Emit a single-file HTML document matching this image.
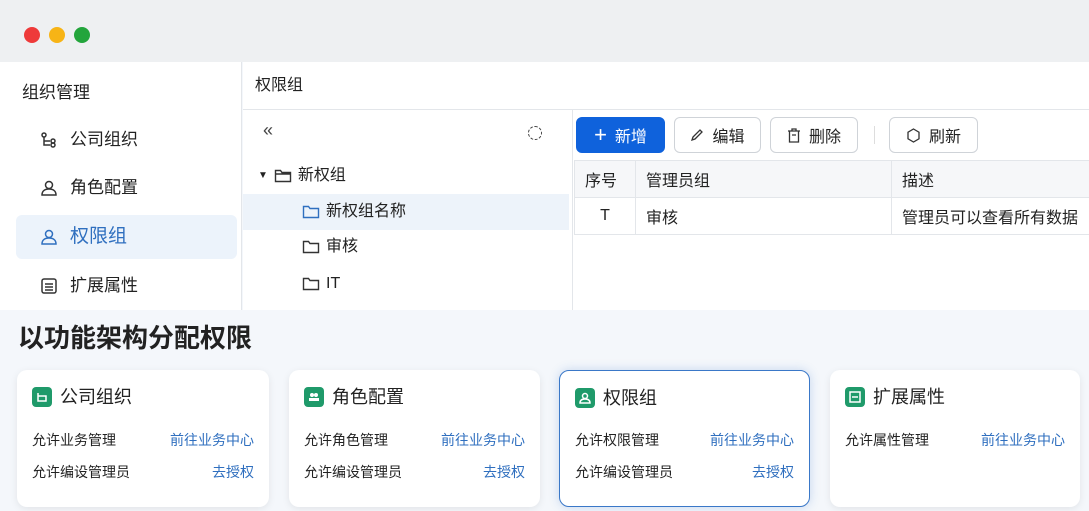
<!DOCTYPE html>
<html><head><meta charset="utf-8"><style>
*{margin:0;padding:0;box-sizing:border-box}
body{width:1089px;height:511px;overflow:hidden;background:#f4f7fb;font-family:"Liberation Sans","Noto Sans CJK SC",sans-serif;color:#222;position:relative}
.abs{position:absolute}
.title{left:0;top:0;width:1089px;height:62px;background:#eef0f2}
.dot{width:16px;height:16px;border-radius:50%;top:27px}
.side{left:0;top:62px;width:242px;height:248px;background:#fff;border-right:1px solid #e3e6ea}
.main{left:243px;top:62px;width:846px;height:248px;background:#fff}
.nav{font-size:17px;display:flex;align-items:center;gap:12px;color:#222;line-height:24px}
.tree{font-size:16px;display:flex;align-items:center;gap:6px;line-height:22px}
.btn{top:117px;height:36px;border:1px solid #cfd3d8;border-radius:6px;background:#fff;font-size:16px;display:flex;align-items:center;justify-content:center;gap:8px}
.card{top:370px;height:137px;background:#fff;border-radius:10px;box-shadow:0 2px 8px rgba(0,0,0,.08)}
.card h3{position:absolute;left:15px;top:15px;font-size:18px;font-weight:normal;display:flex;align-items:center;gap:8px;line-height:24px}
.ic{width:20px;height:20px;background:#1f9a6a;border-radius:4px;display:inline-block}
.row{position:absolute;left:15px;right:15px;font-size:14px;display:flex;justify-content:space-between;line-height:20px}
.row b{font-weight:normal;color:#2f6fbf}
td,th{border:1px solid #e3e6ea;font-weight:normal;font-size:16px;text-align:left;padding:0 10px;height:37px}
</style></head><body>
<div class="abs title"></div>
<div class="abs dot" style="left:24px;background:#ee3a3a"></div>
<div class="abs dot" style="left:49px;background:#f7b416"></div>
<div class="abs dot" style="left:74px;background:#23a53c"></div>
<div class="abs side"></div>
<div class="abs main"></div>
<div class="abs" style="left:22px;top:82px;font-size:17px;line-height:22px">组织管理</div>
<div class="abs nav" style="top:128px;left:40px"><svg width="18" height="18" viewBox="0 0 18 18" fill="none" stroke="#333" stroke-width="1.5"><circle cx="4" cy="4" r="2"/><path d="M4 6v8h6M4 10h6"/><circle cx="13" cy="10" r="2"/><circle cx="13" cy="14" r="2"/></svg>公司组织</div>
<div class="abs nav" style="top:176px;left:40px"><svg width="18" height="18" viewBox="0 0 18 18" fill="none" stroke="#333" stroke-width="1.5"><circle cx="9" cy="6" r="3.5"/><path d="M2 16c0-4 3-6 7-6s7 2 7 6z"/></svg>角色配置</div>
<div class="abs" style="left:16px;top:215px;width:221px;height:44px;background:#ecf3fb;border-radius:6px"></div>
<div class="abs nav" style="top:225px;left:40px;color:#2f6fbf;font-size:19px"><svg width="18" height="18" viewBox="0 0 18 18" fill="none" stroke="#2f6fbf" stroke-width="1.5"><circle cx="9" cy="6" r="3.5"/><path d="M2 16c0-4 3-6 7-6s7 2 7 6z"/></svg>权限组</div>
<div class="abs nav" style="top:274px;left:40px"><svg width="18" height="18" viewBox="0 0 18 18" fill="none" stroke="#333" stroke-width="1.5"><rect x="2" y="2" width="14" height="14" rx="2"/><path d="M5 7h8M5 10h8M5 13h8"/></svg>扩展属性</div>
<div class="abs" style="left:255px;top:75px;font-size:16px;line-height:22px">权限组</div>
<div class="abs" style="left:243px;top:109px;width:846px;height:1px;background:#e3e6ea"></div>
<div class="abs" style="left:572px;top:110px;width:1px;height:200px;background:#e3e6ea"></div>
<div class="abs" style="left:263px;top:120px;font-size:18px;color:#444">«</div>
<div class="abs" style="left:528px;top:126px;width:14px;height:14px;border:1.5px dashed #444;border-radius:50%"></div>
<div class="abs tree" style="left:258px;top:165px"><span style="font-size:10px">▼</span><svg width="18" height="16" viewBox="0 0 18 16" fill="none" stroke="#333" stroke-width="1.4"><path d="M1.5 2.5h5l1.5 2h8.5v9h-15z M1.5 6h15"/></svg>新权组</div>
<div class="abs" style="left:243px;top:194px;width:326px;height:36px;background:#edf3fa"></div>
<div class="abs tree" style="left:302px;top:201px"><svg width="18" height="16" viewBox="0 0 18 16" fill="none" stroke="#2f6fbf" stroke-width="1.4"><path d="M1.5 2.5h5l1.5 2h8.5v9h-15z"/></svg>新权组名称</div>
<div class="abs tree" style="left:302px;top:236px"><svg width="18" height="16" viewBox="0 0 18 16" fill="none" stroke="#333" stroke-width="1.4"><path d="M1.5 2.5h5l1.5 2h8.5v9h-15z"/></svg>审核</div>
<div class="abs tree" style="left:302px;top:273px"><svg width="18" height="16" viewBox="0 0 18 16" fill="none" stroke="#333" stroke-width="1.4"><path d="M1.5 2.5h5l1.5 2h8.5v9h-15z"/></svg>IT</div>
<div class="abs btn" style="left:576px;width:89px;background:#0f62dc;border-color:#0f62dc;color:#fff"><span style="font-size:22px">+</span>新增</div>
<div class="abs btn" style="left:674px;width:87px"><svg width="14" height="14" viewBox="0 0 14 14" fill="none" stroke="#333" stroke-width="1.3"><path d="M2 12l1-3 7-7 2 2-7 7z"/></svg>编辑</div>
<div class="abs btn" style="left:770px;width:88px"><svg width="14" height="15" viewBox="0 0 14 15" fill="none" stroke="#333" stroke-width="1.3"><path d="M1 3h12M5 3V1h4v2M2.5 3v11h9V3M5 7h4"/></svg>删除</div>
<div class="abs" style="left:874px;top:126px;width:1px;height:18px;background:#ddd"></div>
<div class="abs btn" style="left:889px;width:89px"><svg width="15" height="15" viewBox="0 0 15 15" fill="none" stroke="#333" stroke-width="1.3"><path d="M7.5 1l5.5 3.2v6.6L7.5 14 2 10.8V4.2z"/></svg>刷新</div>
<table class="abs" style="left:574px;top:160px;width:520px;border-collapse:collapse">
<tr style="background:#f6f7f9"><th style="width:61px">序号</th><th style="width:256px">管理员组</th><th>描述</th></tr>
<tr><td style="text-align:center">T</td><td>审核</td><td>管理员可以查看所有数据</td></tr>
</table>
<div class="abs" style="left:18px;top:321px;font-size:26px;font-weight:bold;line-height:34px">以功能架构分配权限</div>
<div class="abs card" style="left:17px;width:252px"><h3><span class="ic"><svg width="20" height="20"><path d="M6 6v8h8v-5H6" fill="none" stroke="#fff" stroke-width="1.5"/></svg></span>公司组织</h3><div class="row" style="top:60px">允许业务管理<b>前往业务中心</b></div><div class="row" style="top:92px">允许编设管理员<b>去授权</b></div></div>
<div class="abs card" style="left:289px;width:251px"><h3><span class="ic"><svg width="20" height="20" fill="#fff"><circle cx="8" cy="8" r="2"/><circle cx="12" cy="8" r="2"/><rect x="5" y="11" width="10" height="3"/></svg></span>角色配置</h3><div class="row" style="top:60px">允许角色管理<b>前往业务中心</b></div><div class="row" style="top:92px">允许编设管理员<b>去授权</b></div></div>
<div class="abs card" style="left:559px;width:251px;border:1.5px solid #3a78c8;box-shadow:0 0 10px rgba(58,120,200,.25)"><h3><span class="ic"><svg width="20" height="20" fill="none" stroke="#fff" stroke-width="1.5"><circle cx="10" cy="8" r="2.5"/><path d="M5 15c0-3 2-4 5-4s5 1 5 4z"/></svg></span>权限组</h3><div class="row" style="top:59px">允许权限管理<b>前往业务中心</b></div><div class="row" style="top:91px">允许编设管理员<b>去授权</b></div></div>
<div class="abs card" style="left:830px;width:250px"><h3><span class="ic"><svg width="20" height="20" fill="none" stroke="#fff" stroke-width="1.5"><rect x="5" y="5" width="10" height="10"/><path d="M7 10h6"/></svg></span>扩展属性</h3><div class="row" style="top:60px">允许属性管理<b>前往业务中心</b></div></div>
</body></html>
